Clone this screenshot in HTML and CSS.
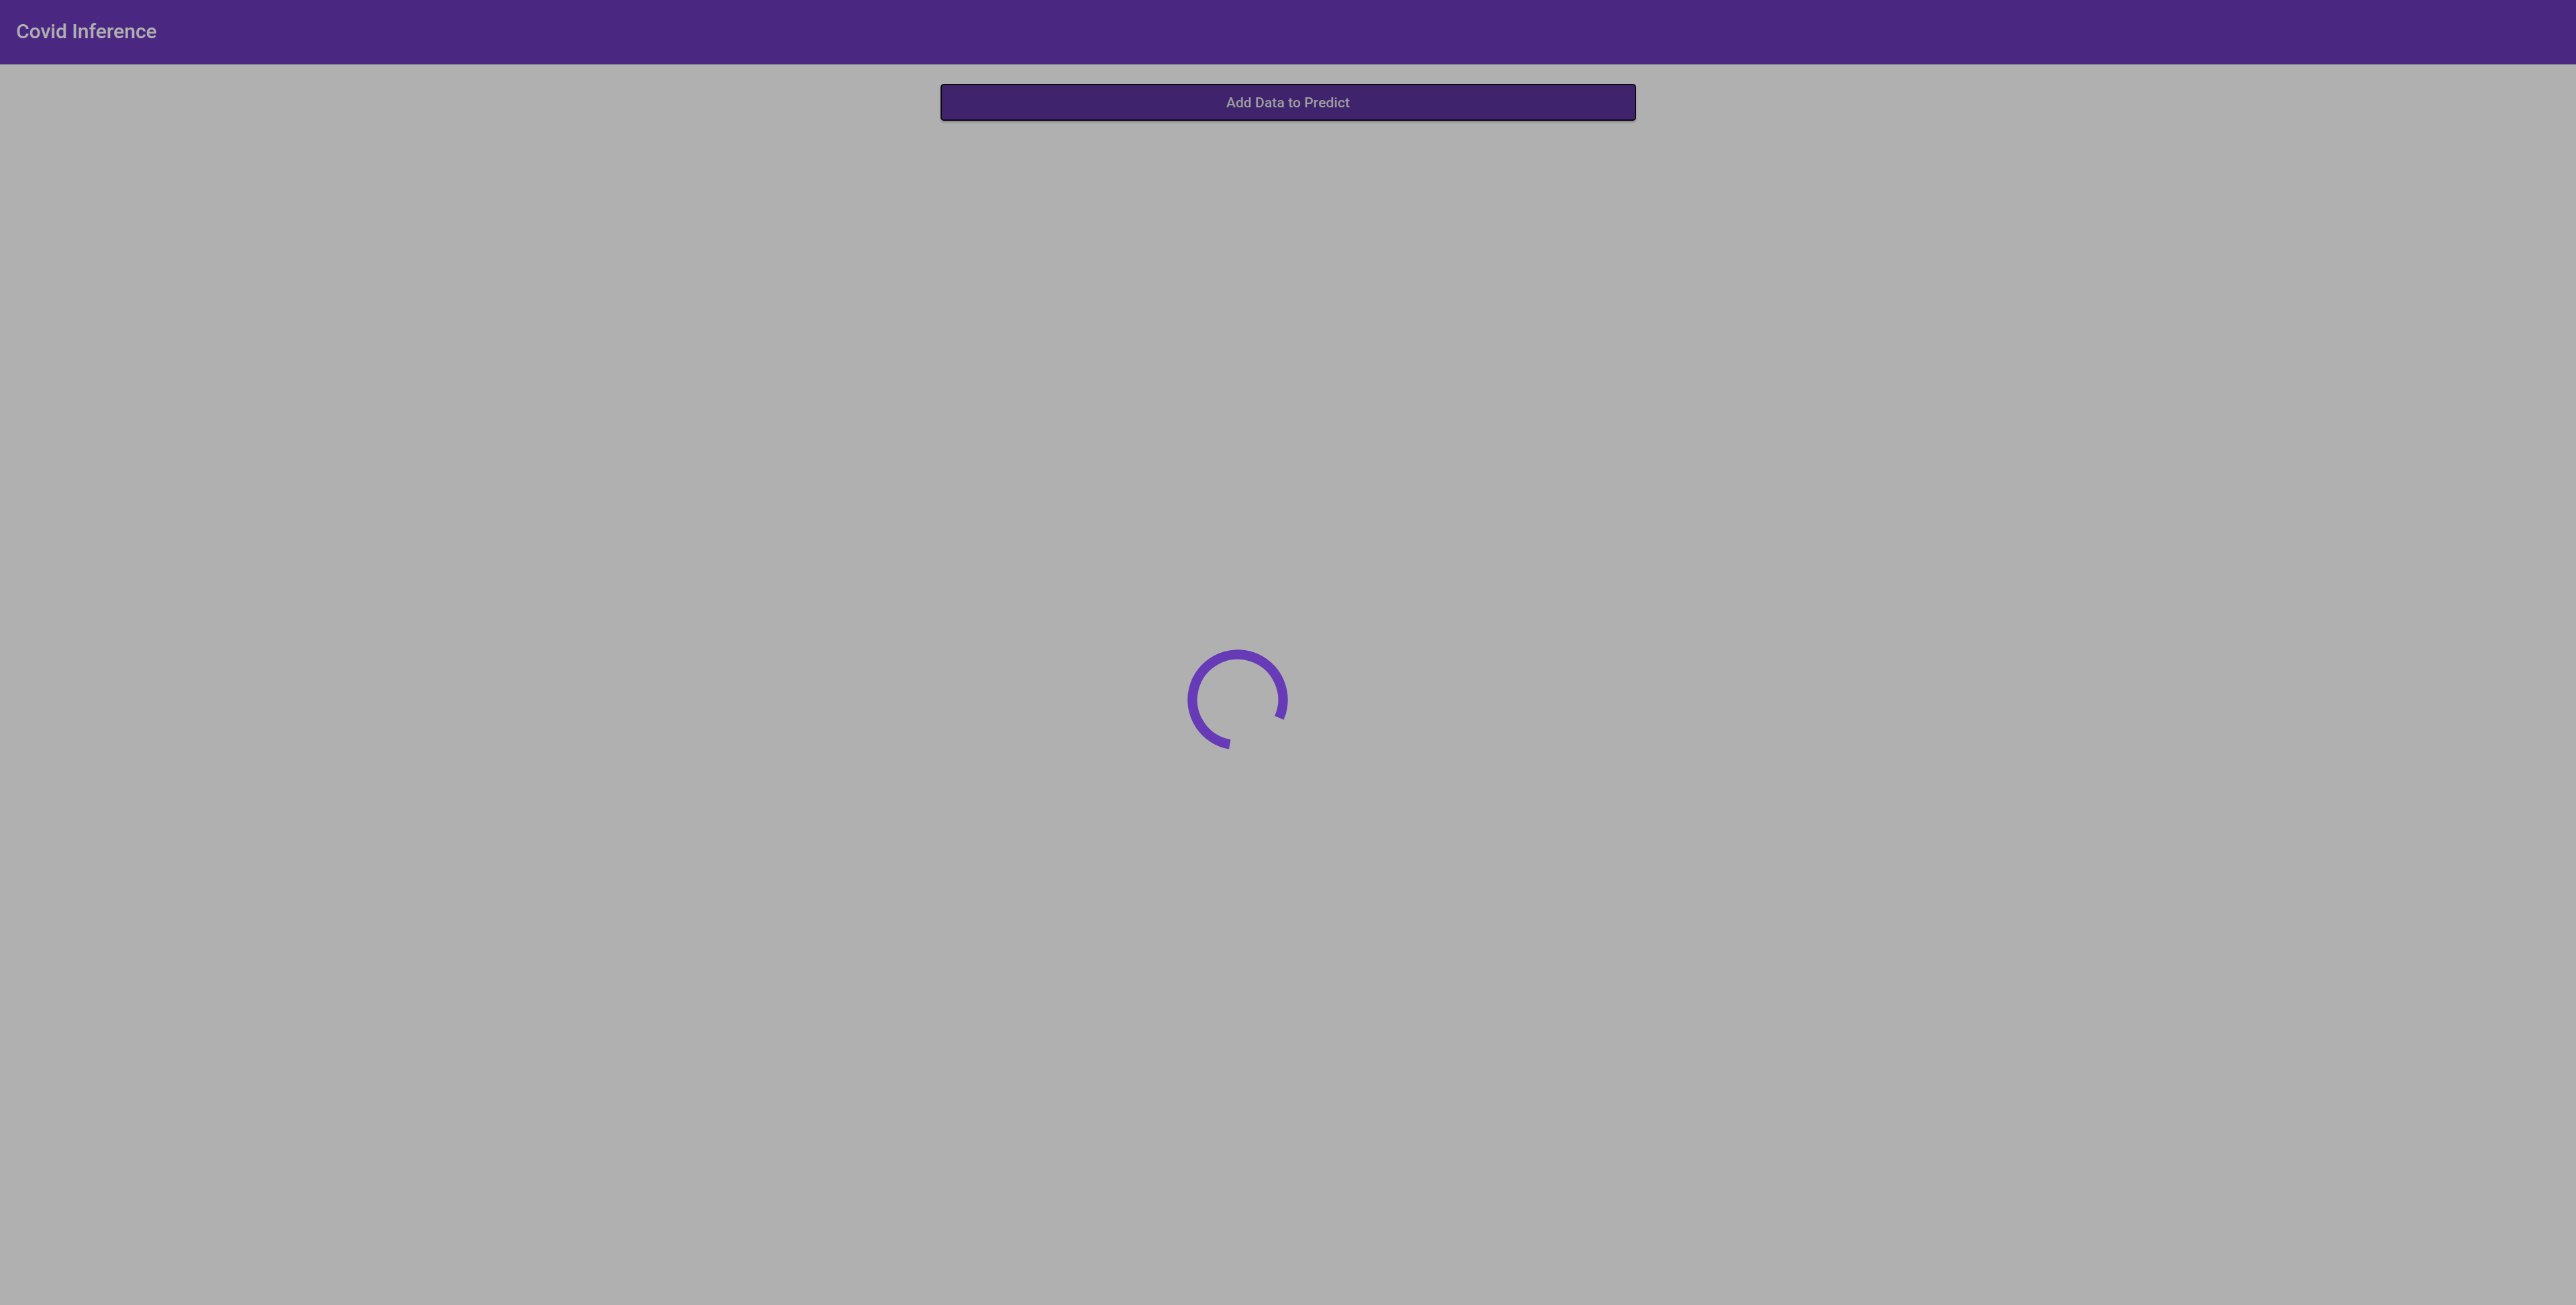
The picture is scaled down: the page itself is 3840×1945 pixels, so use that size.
FILE: index.html
```html
<!DOCTYPE html>
<html lang="en">
<head>
<meta charset="utf-8">
<title>Covid Inference</title>
<link rel="stylesheet" href="styles.css">
</head>
<body>
<header class="appbar">
  <h1 class="title">Covid Inference</h1>
</header>
<main class="content">
  <button class="add-btn" type="button">Add Data to Predict</button>
</main>
<div class="backdrop">
  <svg class="spinner" width="150" height="150" viewBox="0 0 150 150">
    <path d="M63.28 141.47 A67.5 67.5 0 1 1 136.90 101.92" fill="none" stroke="#673ab7" stroke-width="14.5"/>
  </svg>
</div>
</body>
</html>
```
FILE: styles.css
```css
html, body {
  margin: 0;
  padding: 0;
  height: 100%;
}
body {
  background: #b0b0b0;
  font-family: Roboto, "Noto Sans", "Liberation Sans", sans-serif;
}
.appbar {
  height: 96px;
  background: #4a2882;
  display: flex;
  align-items: center;
  padding: 0 24px;
  box-sizing: border-box;
}
.title {
  margin: 0;
  font-size: 30px;
  font-weight: 500;
  color: #b0b0b0;
  letter-spacing: 0;
  line-height: 1;
  padding-bottom: 2px;
}
.content {
  display: flex;
  flex-direction: column;
  align-items: center;
  padding-top: 29px;
}
.add-btn {
  width: 1037px;
  height: 55px;
  background: #3f236c;
  border: 2px solid #0e0b12;
  border-radius: 5px;
  color: #9e9e9e;
  font-family: Roboto, "Noto Sans", "Liberation Sans", sans-serif;
  font-size: 21px;
  font-weight: 500;
  letter-spacing: 0.1px;
  box-shadow: 0 3px 3px -1px rgba(0,0,0,0.18), 0 2px 3px 0 rgba(0,0,0,0.1);
  padding: 0;
}
.backdrop {
  position: fixed;
  inset: 0;
  pointer-events: none;
}
.spinner {
  position: absolute;
  left: 1770px;
  top: 968px;
}
```
